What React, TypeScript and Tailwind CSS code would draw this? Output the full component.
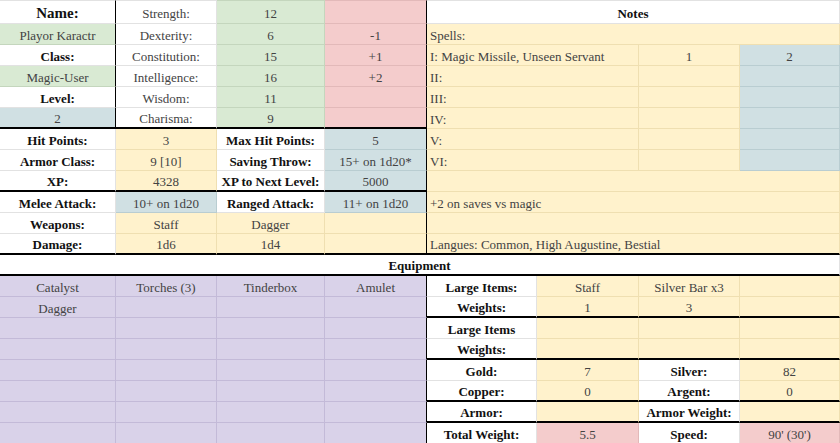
import React from 'react';

// colour + gridline pairs, like the sheet's fills
const W = 'bg-white border-[#e2e2e2]';
const G = 'bg-[#d9ead3] border-[#c4d6bd]';
const P = 'bg-[#f4cccc] border-[#e2b9b9]';
const Y = 'bg-[#fff2cc] border-[#efdfb1]';
const B = 'bg-[#d0e0e3] border-[#b9cdd1]';
const V = 'bg-[#d9d2e9] border-[#c3bad8]';

const RB = 'border-r-black';
const BB = 'border-b-2 border-b-black';

interface CellProps {
  children?: React.ReactNode;
  className?: string;
  bold?: boolean;
  left?: boolean;
}

const Cell = ({ children, className = '', bold, left }: CellProps) => (
  <div
    className={`flex items-center pt-[2px] border-r border-b overflow-hidden whitespace-nowrap text-[13px] leading-none ${
      left ? 'justify-start pl-[3px]' : 'justify-center'
    } ${bold ? 'font-bold text-[#111]' : 'text-[#434343]'} ${className}`}
  >
    {children}
  </div>
);

const App = () => {
  return (
    <div className="w-[840px] h-[443px] overflow-hidden bg-white font-[Liberation_Serif,serif]">
      <div className="grid grid-cols-[116px_101px_108px_102px_110px_102px_101px_100px] grid-rows-[24px_repeat(20,21px)]">
        {/* row 1 */}
        <Cell bold className={`${W} ${RB} border-t text-[15px]`}>Name:</Cell>
        <Cell className={`${W} border-t`}>Strength:</Cell>
        <Cell className={`${G} border-t`}>12</Cell>
        <Cell className={`${P} ${RB} border-t`} />
        <Cell bold className={`${W} border-t col-span-4`}>Notes</Cell>

        {/* row 2 */}
        <Cell className={`${G} ${RB}`}>Playor Karactr</Cell>
        <Cell className={W}>Dexterity:</Cell>
        <Cell className={G}>6</Cell>
        <Cell className={`${P} ${RB}`}>-1</Cell>
        <Cell left className={`${Y} col-span-4`}>Spells:</Cell>

        {/* row 3 */}
        <Cell bold className={`${W} ${RB}`}>Class:</Cell>
        <Cell className={W}>Constitution:</Cell>
        <Cell className={G}>15</Cell>
        <Cell className={`${P} ${RB}`}>+1</Cell>
        <Cell left className={`${Y} col-span-2`}>I: Magic Missile, Unseen Servant</Cell>
        <Cell className={Y}>1</Cell>
        <Cell className={B}>2</Cell>

        {/* row 4 */}
        <Cell className={`${G} ${RB}`}>Magic-User</Cell>
        <Cell className={W}>Intelligence:</Cell>
        <Cell className={G}>16</Cell>
        <Cell className={`${P} ${RB}`}>+2</Cell>
        <Cell left className={`${Y} col-span-2`}>II:</Cell>
        <Cell className={Y} />
        <Cell className={B} />

        {/* row 5 */}
        <Cell bold className={`${W} ${RB}`}>Level:</Cell>
        <Cell className={W}>Wisdom:</Cell>
        <Cell className={G}>11</Cell>
        <Cell className={`${P} ${RB}`} />
        <Cell left className={`${Y} col-span-2`}>III:</Cell>
        <Cell className={Y} />
        <Cell className={B} />

        {/* row 6 */}
        <Cell className={`${B} ${RB} ${BB}`}>2</Cell>
        <Cell className={`${W} ${BB}`}>Charisma:</Cell>
        <Cell className={`${G} ${BB}`}>9</Cell>
        <Cell className={`${P} ${RB} ${BB}`} />
        <Cell left className={`${Y} col-span-2`}>IV:</Cell>
        <Cell className={Y} />
        <Cell className={B} />

        {/* row 7 */}
        <Cell bold className={W}>Hit Points:</Cell>
        <Cell className={Y}>3</Cell>
        <Cell bold className={W}>Max Hit Points:</Cell>
        <Cell className={`${B} ${RB}`}>5</Cell>
        <Cell left className={`${Y} col-span-2`}>V:</Cell>
        <Cell className={Y} />
        <Cell className={B} />

        {/* row 8 */}
        <Cell bold className={W}>Armor Class:</Cell>
        <Cell className={Y}>9 [10]</Cell>
        <Cell bold className={W}>Saving Throw:</Cell>
        <Cell className={`${B} ${RB}`}>15+ on 1d20*</Cell>
        <Cell left className={`${Y} col-span-2`}>VI:</Cell>
        <Cell className={Y} />
        <Cell className={B} />

        {/* row 9 */}
        <Cell bold className={`${W} ${BB}`}>XP:</Cell>
        <Cell className={`${Y} ${BB}`}>4328</Cell>
        <Cell bold className={`${W} ${BB}`}>XP to Next Level:</Cell>
        <Cell className={`${B} ${RB} ${BB}`}>5000</Cell>
        <Cell className={`${Y} col-span-4`} />

        {/* row 10 */}
        <Cell bold className={W}>Melee Attack:</Cell>
        <Cell className={B}>10+ on 1d20</Cell>
        <Cell bold className={W}>Ranged Attack:</Cell>
        <Cell className={`${B} ${RB}`}>11+ on 1d20</Cell>
        <Cell left className={`${Y} col-span-4`}>+2 on saves vs magic</Cell>

        {/* row 11 */}
        <Cell bold className={W}>Weapons:</Cell>
        <Cell className={Y}>Staff</Cell>
        <Cell className={Y}>Dagger</Cell>
        <Cell className={`${Y} ${RB}`} />
        <Cell className={`${Y} col-span-4`} />

        {/* row 12 */}
        <Cell bold className={`${W} ${BB}`}>Damage:</Cell>
        <Cell className={`${Y} ${BB}`}>1d6</Cell>
        <Cell className={`${Y} ${BB}`}>1d4</Cell>
        <Cell className={`${Y} ${RB} ${BB}`} />
        <Cell left className={`${Y} ${BB} col-span-4`}>Langues: Common, High Augustine, Bestial</Cell>

        {/* equipment header */}
        <Cell bold className={`${W} ${BB} col-span-8`}>Equipment</Cell>

        {/* row 14 */}
        <Cell className={V}>Catalyst</Cell>
        <Cell className={V}>Torches (3)</Cell>
        <Cell className={V}>Tinderbox</Cell>
        <Cell className={`${V} ${RB}`}>Amulet</Cell>
        <Cell bold className={W}>Large Items:</Cell>
        <Cell className={Y}>Staff</Cell>
        <Cell className={Y}>Silver Bar x3</Cell>
        <Cell className={Y} />

        {/* row 15 */}
        <Cell className={V}>Dagger</Cell>
        <Cell className={V} />
        <Cell className={V} />
        <Cell className={`${V} ${RB}`} />
        <Cell bold className={`${W} ${BB}`}>Weights:</Cell>
        <Cell className={`${Y} ${BB}`}>1</Cell>
        <Cell className={`${Y} ${BB}`}>3</Cell>
        <Cell className={`${Y} ${BB}`} />

        {/* row 16 */}
        <Cell className={V} />
        <Cell className={V} />
        <Cell className={V} />
        <Cell className={`${V} ${RB}`} />
        <Cell bold className={W}>Large Items</Cell>
        <Cell className={Y} />
        <Cell className={Y} />
        <Cell className={Y} />

        {/* row 17 */}
        <Cell className={V} />
        <Cell className={V} />
        <Cell className={V} />
        <Cell className={`${V} ${RB}`} />
        <Cell bold className={`${W} ${BB}`}>Weights:</Cell>
        <Cell className={`${Y} ${BB}`} />
        <Cell className={`${Y} ${BB}`} />
        <Cell className={`${Y} ${BB}`} />

        {/* row 18 */}
        <Cell className={V} />
        <Cell className={V} />
        <Cell className={V} />
        <Cell className={`${V} ${RB}`} />
        <Cell bold className={W}>Gold:</Cell>
        <Cell className={Y}>7</Cell>
        <Cell bold className={W}>Silver:</Cell>
        <Cell className={Y}>82</Cell>

        {/* row 19 */}
        <Cell className={V} />
        <Cell className={V} />
        <Cell className={V} />
        <Cell className={`${V} ${RB}`} />
        <Cell bold className={`${W} ${BB}`}>Copper:</Cell>
        <Cell className={`${Y} ${BB}`}>0</Cell>
        <Cell bold className={`${W} ${BB}`}>Argent:</Cell>
        <Cell className={`${Y} ${BB}`}>0</Cell>

        {/* row 20 */}
        <Cell className={V} />
        <Cell className={V} />
        <Cell className={V} />
        <Cell className={`${V} ${RB}`} />
        <Cell bold className={`${W} ${BB}`}>Armor:</Cell>
        <Cell className={`${Y} ${BB}`} />
        <Cell bold className={`${W} ${BB}`}>Armor Weight:</Cell>
        <Cell className={`${Y} ${BB}`} />

        {/* row 21 */}
        <Cell className={V} />
        <Cell className={V} />
        <Cell className={V} />
        <Cell className={`${V} ${RB}`} />
        <Cell bold className={W}>Total Weight:</Cell>
        <Cell className={P}>5.5</Cell>
        <Cell bold className={W}>Speed:</Cell>
        <Cell className={P}>90' (30')</Cell>
      </div>
    </div>
  );
};

export default App;
